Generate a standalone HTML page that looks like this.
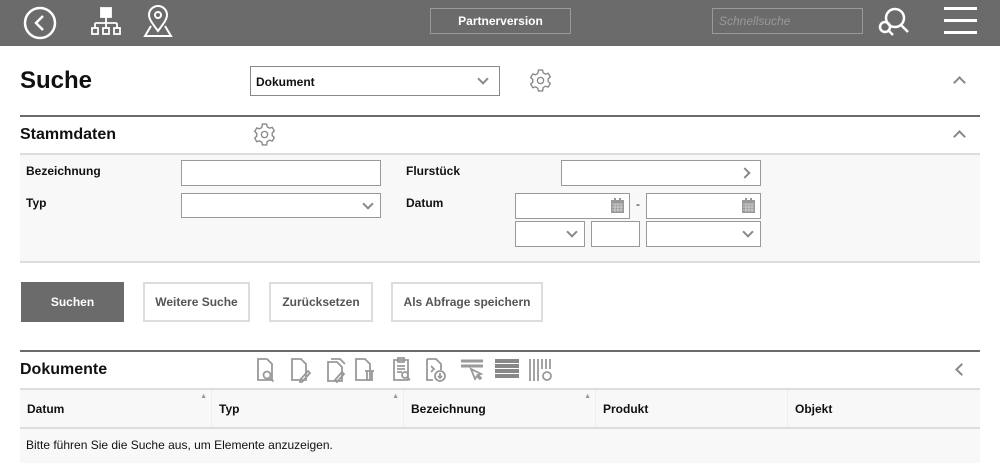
<!DOCTYPE html>
<html><head><meta charset="utf-8"><style>
*{box-sizing:border-box;margin:0;padding:0}
body{width:1000px;height:463px;overflow:hidden;background:#fff;font-family:"Liberation Sans",Arial,sans-serif;color:#111;position:relative}
.a{position:absolute}
.b{font-weight:bold}
.inp{position:absolute;background:#fff;border:1px solid #999}
.btn{position:absolute;top:282px;height:40px;border:2px solid #ddd;background:#fff;font-size:12px;font-weight:bold;color:#555;display:flex;align-items:center;justify-content:center}
.chev{position:absolute;width:8px;height:8px;border-right:2px solid #888;border-bottom:2px solid #888;transform:rotate(45deg)}
.th{position:absolute;top:390px;height:38px;font-size:12px;font-weight:bold;padding:12px 0 0 7px;border-right:1px solid #eee}
</style></head><body>
<div class="a" style="left:0;top:0;width:1000px;height:46px;background:#6b6b6b"></div>
<svg class="a" style="left:22px;top:5px" width="36" height="36" viewBox="0 0 36 36" fill="none" stroke="#fff" stroke-width="2.5"><circle cx="18" cy="18" r="15"/><path d="M21 11l-7 7 7 7"/></svg>
<svg class="a" style="left:90px;top:7px" width="32" height="30" viewBox="0 0 32 30" fill="none" stroke="#fff" stroke-width="1.8"><rect x="11" y="1" width="10" height="9" fill="#fff"/><path d="M16 10v6M5 16h22M5 16v5M16 16v5M27 16v5"/><rect x="2" y="21" width="6" height="6"/><rect x="13" y="21" width="6" height="6"/><rect x="24" y="21" width="6" height="6"/></svg>
<svg class="a" style="left:142px;top:4px" width="32" height="34" viewBox="0 0 32 34" fill="none" stroke="#fff" stroke-width="2"><path d="M16 27C10 19 7 15 7 11a9 9 0 0 1 18 0c0 4-3 8-9 16z"/><circle cx="16" cy="11" r="3"/><path d="M9 22L3 32h26l-6-10"/></svg>
<div class="a" style="left:430px;top:8px;width:141px;height:26px;border:1px solid #999;color:#fff;font-size:12px;font-weight:bold;text-align:center;line-height:24px">Partnerversion</div>
<div class="a" style="left:712px;top:8px;width:151px;height:26px;border:1px solid #999;color:#999;font-size:12px;font-style:italic;padding:5px 6px">Schnellsuche</div>
<svg class="a" style="left:876px;top:4px" width="38" height="36" viewBox="0 0 38 36" fill="none" stroke="#fff" stroke-width="2.5"><circle cx="19" cy="14" r="9"/><path d="M25 21l7 7"/><circle cx="9" cy="23" r="5"/><path d="M13 27l4 4"/></svg>
<div class="a" style="left:944px;top:7px;width:33px;height:3px;background:#fff"></div>
<div class="a" style="left:944px;top:19px;width:33px;height:3px;background:#fff"></div>
<div class="a" style="left:944px;top:31px;width:33px;height:3px;background:#fff"></div>

<div class="a b" style="left:20px;top:67px;font-size:24px">Suche</div>
<div class="inp" style="left:250px;top:66px;width:250px;height:30px;border-color:#888"><span class="a b" style="left:5px;top:8px;font-size:12px">Dokument</span><div class="chev" style="right:12px;top:8px"></div></div>
<svg class="a" style="left:528px;top:68px" width="25" height="25" viewBox="0 0 24 24" fill="none" stroke="#888" stroke-width="1.3"><path d="M10 2h4l.6 2.6 2.2 1.3 2.6-.8 2 3.4-2 1.9v2.6l2 1.9-2 3.4-2.6-.8-2.2 1.3L14 22h-4l-.6-2.6-2.2-1.3-2.6.8-2-3.4 2-1.9v-2.6l-2-1.9 2-3.4 2.6.8 2.2-1.3z"/><circle cx="12" cy="12" r="3"/></svg>
<div class="chev" style="left:955px;top:78px;width:9px;height:9px;transform:rotate(225deg)"></div>

<div class="a" style="left:20px;top:115px;width:960px;height:2px;background:#6b6b6b"></div>
<div class="a b" style="left:20px;top:126px;font-size:16px">Stammdaten</div>
<svg class="a" style="left:252px;top:122px" width="25" height="25" viewBox="0 0 24 24" fill="none" stroke="#888" stroke-width="1.3"><path d="M10 2h4l.6 2.6 2.2 1.3 2.6-.8 2 3.4-2 1.9v2.6l2 1.9-2 3.4-2.6-.8-2.2 1.3L14 22h-4l-.6-2.6-2.2-1.3-2.6.8-2-3.4 2-1.9v-2.6l-2-1.9 2-3.4 2.6.8 2.2-1.3z"/><circle cx="12" cy="12" r="3"/></svg>
<div class="chev" style="left:955px;top:132px;width:9px;height:9px;transform:rotate(225deg)"></div>
<div class="a" style="left:20px;top:153px;width:960px;height:2px;background:#ddd"></div>
<div class="a" style="left:20px;top:155px;width:960px;height:106px;background:#f8f8f8"></div>
<div class="a" style="left:20px;top:261px;width:960px;height:2px;background:#ddd"></div>
<div class="a b" style="left:26px;top:164px;font-size:12px">Bezeichnung</div>
<div class="a b" style="left:26px;top:196px;font-size:12px">Typ</div>
<div class="a b" style="left:406px;top:164px;font-size:12px">Flurstück</div>
<div class="a b" style="left:406px;top:196px;font-size:12px">Datum</div>
<div class="inp" style="left:181px;top:160px;width:200px;height:26px"></div>
<div class="inp" style="left:181px;top:193px;width:200px;height:25px"><div class="chev" style="right:8px;top:6px"></div></div>
<div class="inp" style="left:561px;top:160px;width:200px;height:26px"><div class="chev" style="right:11px;top:8px;transform:rotate(-45deg)"></div></div>
<div class="inp" style="left:515px;top:193px;width:115px;height:26px"><svg class="a" style="right:5px;top:4px" width="13" height="15"><rect x="0" y="2" width="13" height="13" fill="#999"/><rect x="3" y="0" width="2" height="4" fill="#999"/><rect x="8" y="0" width="2" height="4" fill="#999"/><path d="M1 6h11M4 6v8M7 6v8M10 6v8M1 9h11M1 12h11" stroke="#ddd" stroke-width=".7"/></svg></div>
<div class="a" style="left:636px;top:197px;font-size:12px">-</div>
<div class="inp" style="left:646px;top:193px;width:115px;height:26px"><svg class="a" style="right:5px;top:4px" width="13" height="15"><rect x="0" y="2" width="13" height="13" fill="#999"/><rect x="3" y="0" width="2" height="4" fill="#999"/><rect x="8" y="0" width="2" height="4" fill="#999"/><path d="M1 6h11M4 6v8M7 6v8M10 6v8M1 9h11M1 12h11" stroke="#ddd" stroke-width=".7"/></svg></div>
<div class="inp" style="left:515px;top:221px;width:70px;height:26px"><div class="chev" style="right:8px;top:6px"></div></div>
<div class="inp" style="left:591px;top:221px;width:49px;height:26px"></div>
<div class="inp" style="left:646px;top:221px;width:115px;height:26px"><div class="chev" style="right:8px;top:6px"></div></div>

<div class="btn" style="left:21px;width:103px;background:#6b6b6b;border-color:#6b6b6b;color:#fff">Suchen</div>
<div class="btn" style="left:143px;width:107px">Weitere Suche</div>
<div class="btn" style="left:269px;width:104px">Zurücksetzen</div>
<div class="btn" style="left:391px;width:152px">Als Abfrage speichern</div>

<div class="a" style="left:20px;top:350px;width:960px;height:2px;background:#6b6b6b"></div>
<div class="a b" style="left:20px;top:361px;font-size:16px">Dokumente</div>
<svg class="a" style="left:255px;top:356px" width="302" height="28" viewBox="0 0 302 28" fill="none" stroke="#999" stroke-width="1.8">
<path d="M3 3h9l5 5v16H3z"/><circle cx="12" cy="19" r="3.5"/><path d="M14.5 21.5l4 4"/>
<path d="M37 3h9l5 5v16H37z"/><path d="M45 24l8-9 2 2-8 9h-2z"/>
<path d="M73 6h9l5 5v14H73zM76 3h9l5 5"/><path d="M80 24l7-8 2 2-7 8z"/>
<path d="M101 3h9l5 5v16h-14z"/><path d="M110 15h9M112 15v9h5v-9"/>
<path d="M139 4h14v20h-14zM143 2h6v4h-6zM142 10h8M142 13h8M142 16h5"/><circle cx="150" cy="19" r="3"/><path d="M152 21l3 3"/>
<path d="M172 3h9l5 5v6M172 3v21h6"/><path d="M176 10l3 3-3 3"/><circle cx="185" cy="20" r="5"/><path d="M185 17v5M183 20l2 2 2-2"/>
<path d="M206 5h22M206 10h22" stroke-width="3"/><path d="M216 13l4 10 2-3 3 3 1-1-3-3 3-1z"/>
<path d="M240 5h24M240 10h24M240 15h24M240 20h24" stroke-width="4" stroke="#888"/>
<path d="M275 3v22M279 3v22M283 3v22M287 3v10M291 3v10M295 3v10"/><circle cx="292" cy="20" r="4"/>
</svg>
<div class="chev" style="left:957px;top:365px;width:9px;height:9px;transform:rotate(135deg)"></div>
<div class="a" style="left:20px;top:388px;width:960px;height:2px;background:#ddd"></div>
<div class="a" style="left:20px;top:390px;width:960px;height:73px;background:#f8f8f8"></div>
<div class="th" style="left:20px;width:192px">Datum<span class="a" style="right:4px;top:3px;font-size:7px;color:#999">▲</span></div>
<div class="th" style="left:212px;width:192px">Typ<span class="a" style="right:4px;top:3px;font-size:7px;color:#999">▲</span></div>
<div class="th" style="left:404px;width:192px">Bezeichnung<span class="a" style="right:4px;top:3px;font-size:7px;color:#999">▲</span></div>
<div class="th" style="left:596px;width:192px">Produkt</div>
<div class="th" style="left:788px;width:192px;border:none">Objekt</div>
<div class="a" style="left:20px;top:427px;width:960px;height:2px;background:#ddd"></div>
<div class="a" style="left:26px;top:438px;font-size:12px">Bitte führen Sie die Suche aus, um Elemente anzuzeigen.</div>
</body></html>
